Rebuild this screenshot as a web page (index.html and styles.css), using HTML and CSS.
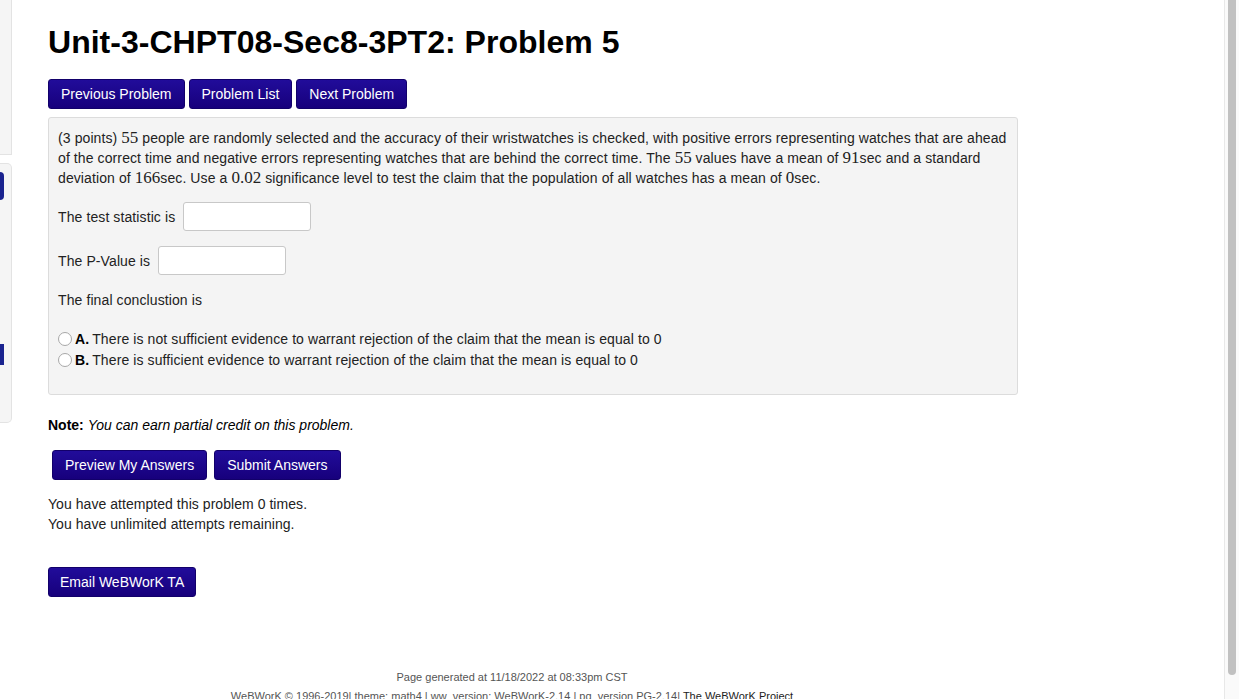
FILE: index.html
```html
<!DOCTYPE html>
<html>
<head>
<meta charset="utf-8">
<link rel="stylesheet" href="styles.css">
</head>
<body>
<div class="page">
  <aside class="sidebar">
    <div class="side-box top"></div>
    <div class="side-box nav">
      <div class="side-pill"></div>
      <div class="side-bar"></div>
    </div>
  </aside>
  <main class="main">
    <h1 class="title">Unit-3-CHPT08-Sec8-3PT2: Problem 5</h1>
    <div class="btn-row">
      <button class="btn">Previous Problem</button>
      <button class="btn">Problem List</button>
      <button class="btn">Next Problem</button>
    </div>
    <div class="problem">
      <p class="statement">(3 points) <span class="m">55</span> people are randomly selected and the accuracy of their wristwatches is checked, with positive errors representing watches that are ahead of the correct time and negative errors representing watches that are behind the correct time. The <span class="m">55</span> values have a mean of <span class="m">91</span>sec and a standard deviation of <span class="m">166</span>sec. Use a <span class="m">0.02</span> significance level to test the claim that the population of all watches has a mean of <span class="m">0</span>sec.</p>
      <p class="field">The test statistic is <input class="answer" type="text"></p>
      <p class="field">The P-Value is <input class="answer" type="text"></p>
      <p class="plain">The final conclustion is</p>
      <div class="choices">
        <label class="choice"><span class="radio"></span><b>A.</b> There is not sufficient evidence to warrant rejection of the claim that the mean is equal to 0</label>
        <label class="choice"><span class="radio"></span><b>B.</b> There is sufficient evidence to warrant rejection of the claim that the mean is equal to 0</label>
      </div>
    </div>
    <p class="note"><b>Note:</b> <i>You can earn partial credit on this problem.</i></p>
    <div class="btn-row submit-row">
      <button class="btn big">Preview My Answers</button>
      <button class="btn big">Submit Answers</button>
    </div>
    <p class="attempts">You have attempted this problem 0 times.<br>You have unlimited attempts remaining.</p>
    <button class="btn big email">Email WeBWorK TA</button>
  </main>
</div>
<footer class="footer">
  <p class="gen">Page generated at 11/18/2022 at 08:33pm CST</p>
  <p class="ver">WeBWorK © 1996-2019| theme: math4 | ww_version: WeBWorK-2.14 | pg_version PG-2.14| <span class="proj">The WeBWorK Project</span></p>
</footer>
<div class="scrollbar"><div class="thumb"></div></div>
</body>
</html>
```
FILE: styles.css
```css
html, body {
  margin: 0;
  padding: 0;
  height: 699px;
  overflow: hidden;
  background: #fff;
  font-family: "Liberation Sans", Arial, sans-serif;
  color: #222;
}
.page {
  display: flex;
  align-items: flex-start;
}
.sidebar {
  width: 12px;
  flex: none;
  display: flex;
  flex-direction: column;
  gap: 8px;
}
.side-box {
  background: #f5f5f5;
  border: 1px solid #e3e3e3;
  border-left: none;
  box-sizing: border-box;
}
.side-box.top {
  height: 155px;
  border-top: none;
}
.side-box.nav {
  height: 260px;
  border-radius: 0 5px 5px 0;
  padding-top: 8px;
  display: flex;
  flex-direction: column;
}
.side-pill {
  width: 4px;
  height: 28px;
  background: #1a238f;
  border-radius: 0 4px 4px 0;
}
.side-bar {
  width: 4px;
  height: 21px;
  margin-top: 144px;
  background: #1a238f;
}
.main {
  margin-left: 36px;
  width: 970px;
}
.title {
  margin: 22px 0 0;
  font-size: 32px;
  line-height: 40px;
  font-weight: bold;
  color: #000;
  letter-spacing: 0.02px;
}
.btn-row {
  display: flex;
  gap: 4px;
  margin-top: 17px;
}
.btn {
  font-family: "Liberation Sans", Arial, sans-serif;
  font-size: 14px;
  color: #fff;
  background: linear-gradient(#210c9a, #17007c);
  border: 1px solid #12006a;
  border-radius: 3px;
  height: 30px;
  padding: 0 12px;
  line-height: 28px;
  cursor: pointer;
}
.problem {
  margin-top: 8px;
  background: #f4f4f4;
  border: 1px solid #dcdcdc;
  border-radius: 3px;
  padding: 10px 9px 24px;
  font-size: 14px;
  line-height: 20px;
  color: #222;
  letter-spacing: 0.1px;
  box-sizing: border-box;
}
.problem p {
  margin: 0;
}
.m {
  font-family: "Liberation Serif", "Times New Roman", serif;
  font-size: 17px;
  letter-spacing: 0;
}
.field {
  display: flex;
  align-items: center;
  gap: 8px;
  margin-top: 14px !important;
  height: 29px;
}
.field + .field {
  margin-top: 15px !important;
}
.answer {
  width: 128px;
  height: 29px;
  box-sizing: border-box;
  border: 1px solid #c8c8c8;
  border-radius: 3px;
  background: #fff;
  font-size: 14px;
}
.plain {
  margin-top: 15px !important;
}
.choices {
  margin-top: 18px;
  display: flex;
  flex-direction: column;
}
.choice {
  display: flex;
  align-items: center;
  gap: 3px;
  height: 21px;
}
.choice b {
  color: #000;
}
.radio {
  width: 12px;
  height: 12px;
  border: 1px solid #a8a8a8;
  border-radius: 50%;
  background: #fff;
  flex: none;
}
.note {
  margin: 20px 0 0;
  font-size: 14px;
  line-height: 20px;
  color: #000;
}
.submit-row {
  margin-top: 15px;
  margin-left: 4px;
  gap: 7px;
}
.attempts {
  margin: 14px 0 0;
  font-size: 14px;
  line-height: 20px;
  color: #222;
  letter-spacing: 0.05px;
}
.email {
  margin-top: 33px;
  padding: 0 11px;
}
.footer {
  width: 1024px;
  text-align: center;
  margin-top: 71px;
  font-size: 11px;
  color: #555;
}
.footer p {
  margin: 0;
  line-height: 19px;
}
.proj {
  color: #222;
}
.scrollbar {
  position: fixed;
  top: 0;
  right: 0;
  width: 14px;
  height: 699px;
  background: #fafafa;
  border-left: 1px solid #e8e8e8;
}
.thumb {
  margin: 0 auto 0 3px;
  width: 8px;
  height: 675px;
  background: #c1c1c1;
  border-radius: 0 0 4px 4px;
}
```
